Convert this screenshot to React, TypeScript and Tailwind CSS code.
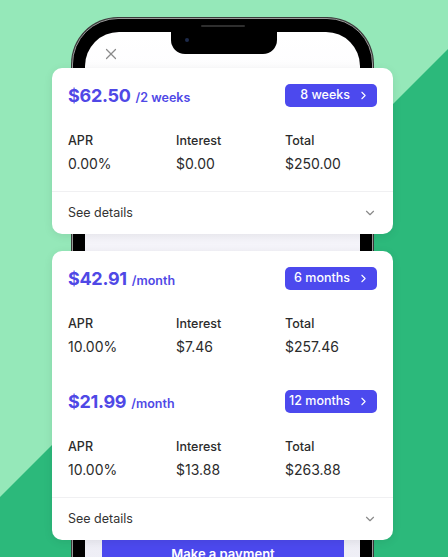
import { ChevronRight, ChevronDown, X } from "lucide-react";

// ─── Data ────────────────────────────────────────────────────────────────────

type Plan = {
  price: string;
  period: string;
  term: string;
  apr: string;
  interest: string;
  total: string;
};

const weekly: Plan[] = [
  { price: "$62.50", period: "/2 weeks", term: "8 weeks", apr: "0.00%", interest: "$0.00", total: "$250.00" },
];

const monthly: Plan[] = [
  { price: "$42.91", period: "/month", term: "6 months", apr: "10.00%", interest: "$7.46", total: "$257.46" },
  { price: "$21.99", period: "/month", term: "12 months", apr: "10.00%", interest: "$13.88", total: "$263.88" },
];

// ─── Pieces ──────────────────────────────────────────────────────────────────

const PlanRow = ({ plan }: { plan: Plan }) => (
  <div className="px-4 pt-4 pb-[18px]">
    <div className="flex items-center justify-between h-[23px]">
      <div className="flex items-baseline gap-[5px] text-[#4f48e6]">
        <span className="text-[18px] font-bold tracking-[-0.3px]">{plan.price}</span>
        <span className="text-[12.5px] font-semibold">{plan.period}</span>
      </div>
      <button className="flex items-center justify-end gap-[7px] w-[92px] h-[23px] rounded-[5px] bg-[#4c49ee] pr-[7px] text-white text-[12.5px] font-medium">
        {plan.term}
        <ChevronRight size={13} strokeWidth={2} />
      </button>
    </div>

    <div className="grid grid-cols-[108px_109px_1fr] mt-[26px] text-[#2b2b2b]">
      <span className="text-[12.5px] font-medium leading-4">APR</span>
      <span className="text-[12.5px] font-medium leading-4">Interest</span>
      <span className="text-[12.5px] font-medium leading-4">Total</span>
      <span className="mt-[6px] text-[14px] leading-[18px]">{plan.apr}</span>
      <span className="mt-[6px] text-[14px] leading-[18px]">{plan.interest}</span>
      <span className="mt-[6px] text-[14px] leading-[18px]">{plan.total}</span>
    </div>
  </div>
);

const Card = ({ plans }: { plans: Plan[] }) => (
  <div className="bg-white rounded-[10px] shadow-[0_2px_10px_rgba(0,0,0,0.08)]">
    {plans.map((p) => (
      <PlanRow key={p.term} plan={p} />
    ))}
    <div className="border-t border-[#f0f0f2] h-[43px] px-4 flex items-center justify-between">
      <span className="text-[12.5px] text-[#333]">See details</span>
      <ChevronDown size={14} className="text-[#8a8a8a]" />
    </div>
  </div>
);

// ─── App ─────────────────────────────────────────────────────────────────────

export default function App() {
  return (
    <div
      className="relative w-[448px] h-[557px] overflow-hidden bg-[#95e8b9]"
      style={{ fontFamily: "Inter, 'Open Sans', sans-serif" }}
    >
      {/* diagonal background */}
      <svg className="absolute inset-0" width="448" height="557" viewBox="0 0 448 557">
        <polygon points="0,497 448,49 448,557 0,557" fill="#2cb97b" />
      </svg>

      {/* phone */}
      <div className="absolute left-[72px] top-[18px] w-[301px] h-[620px] rounded-[46px] bg-black border border-[#9a9a9a] shadow-[0_0_0_1px_#3a3a3a]">
        <div className="absolute left-[12px] top-[13px] right-[12px] bottom-[12px] rounded-[34px] bg-gradient-to-b from-white via-[#f1f0f8] to-[#eeeef5] overflow-hidden">
          <div className="absolute left-[86px] top-0 w-[106px] h-[22px] bg-black rounded-b-[14px]" />
          <div className="absolute left-[100px] top-[6px] w-[4px] h-[4px] rounded-full bg-[#1d2a4a]" />
          <div className="absolute left-[17px] top-[13px] text-[#8a8a8a]">
            <X size={18} strokeWidth={1.6} />
          </div>
          <div className="absolute left-[17px] right-[16px] top-[508px] h-[30px] bg-[#4c49ee] flex items-start justify-center pt-[5px] text-white text-[13px] font-semibold">
            Make a payment
          </div>
        </div>
        <div className="absolute left-[128px] top-[6px] w-[44px] h-[2px] rounded-full bg-[#2e2e2e]" />
      </div>

      {/* cards */}
      <div className="relative flex flex-col gap-[17px] pt-[68px] pl-[52px] pr-[55px]">
        <Card plans={weekly} />
        <Card plans={monthly} />
      </div>
    </div>
  );
}
